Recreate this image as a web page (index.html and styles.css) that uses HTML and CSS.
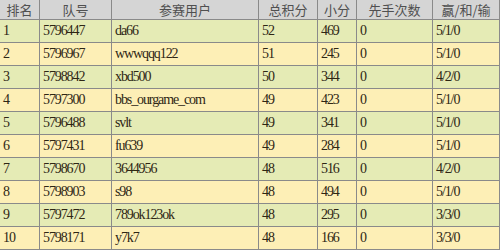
FILE: index.html
```html
<!DOCTYPE html>
<html lang="zh">
<head>
<meta charset="utf-8">
<link rel="stylesheet" href="styles.css">
</head>
<body>
<table class="rank">
  <colgroup>
    <col class="c1"><col class="c2"><col class="c3"><col class="c4"><col class="c5"><col class="c6"><col class="c7">
  </colgroup>
  <thead>
    <tr><th>排名</th><th>队号</th><th>参赛用户</th><th>总积分</th><th>小分</th><th>先手次数</th><th>赢/和/输</th></tr>
  </thead>
  <tbody>
    <tr class="g"><td>1</td><td>5796447</td><td>da66</td><td>52</td><td>469</td><td>0</td><td>5/1/0</td></tr>
    <tr class="y"><td>2</td><td>5796967</td><td>wwwqqq122</td><td>51</td><td>245</td><td>0</td><td>5/1/0</td></tr>
    <tr class="g"><td>3</td><td>5798842</td><td>xbd500</td><td>50</td><td>344</td><td>0</td><td>4/2/0</td></tr>
    <tr class="y"><td>4</td><td>5797300</td><td>bbs_ourgame_com</td><td>49</td><td>423</td><td>0</td><td>5/1/0</td></tr>
    <tr class="g"><td>5</td><td>5796488</td><td>svlt</td><td>49</td><td>341</td><td>0</td><td>5/1/0</td></tr>
    <tr class="y"><td>6</td><td>5797431</td><td>fu639</td><td>49</td><td>284</td><td>0</td><td>5/1/0</td></tr>
    <tr class="g"><td>7</td><td>5798670</td><td>3644956</td><td>48</td><td>516</td><td>0</td><td>4/2/0</td></tr>
    <tr class="y"><td>8</td><td>5798903</td><td>s98</td><td>48</td><td>494</td><td>0</td><td>5/1/0</td></tr>
    <tr class="g"><td>9</td><td>5797472</td><td>789ok123ok</td><td>48</td><td>295</td><td>0</td><td>3/3/0</td></tr>
    <tr class="y"><td>10</td><td>5798171</td><td>y7k7</td><td>48</td><td>166</td><td>0</td><td>3/3/0</td></tr>
  </tbody>
</table>
</body>
</html>
```
FILE: styles.css
```css
html, body {
  margin: 0;
  padding: 0;
  background: #ffffff;
}
.rank {
  border-collapse: collapse;
  table-layout: fixed;
  width: 501px;
  margin: -1px 0 0 -1px;
}
.c1 { width: 40px; }
.c2 { width: 72px; }
.c3 { width: 147px; }
.c4 { width: 59px; }
.c5 { width: 39px; }
.c6 { width: 76px; }
.c7 { width: 67px; }
.rank th, .rank td {
  border: 1px solid #8a8a8a;
  padding: 0 0 0 3px;
  overflow: hidden;
  white-space: nowrap;
}
.rank th {
  height: 19px;
  background: #d5d5d5;
  color: #505050;
  font: 13px/19px "Noto Sans CJK SC", sans-serif;
  font-weight: normal;
  text-align: center;
  padding: 0;
}
.rank td {
  height: 22px;
  font: 14px/22px "Liberation Serif", "Noto Sans CJK SC", serif;
  letter-spacing: -1.1px;
  color: #2e2614;
  text-align: left;
}
.g td { background: #e5ebb5; }
.y td { background: #fdefb6; }
```
